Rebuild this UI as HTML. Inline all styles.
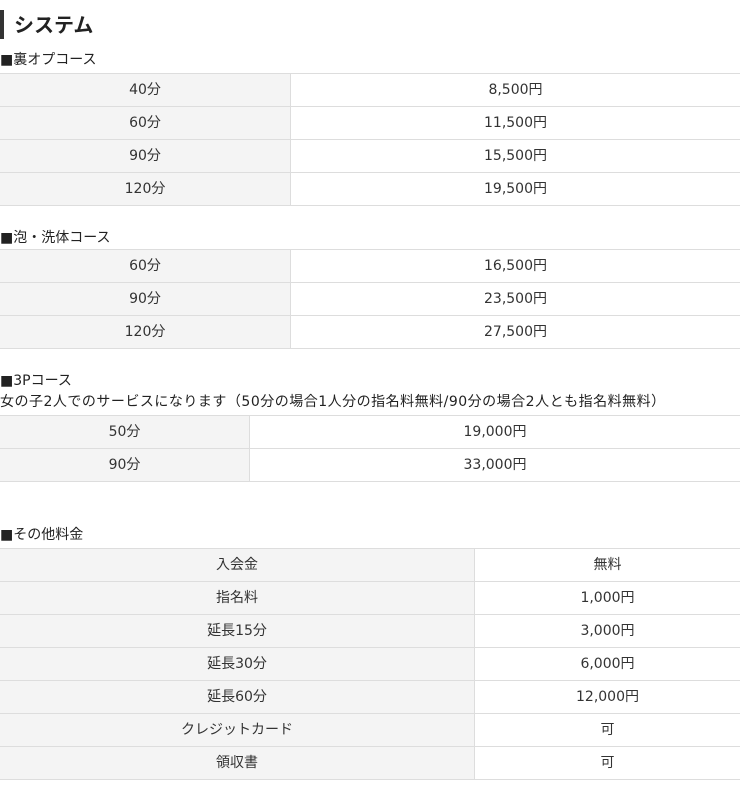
<!DOCTYPE html><html><head><meta charset="utf-8"><style>
body{margin:0;width:740px;height:789px;background:#fff;font-family:"DejaVu Sans","Noto Sans CJK JP",sans-serif;color:#333;position:relative;overflow:hidden}
.h{position:absolute;left:0;top:10px;height:29px;border-left:4px solid #333;padding-left:10px;font-size:20px;font-weight:bold;line-height:28px;color:#222;font-family:"Noto Sans CJK JP",sans-serif}
.l{position:absolute;left:0;font-size:14px;line-height:20px;color:#222}
table{position:absolute;left:0;width:740px;border-collapse:collapse;font-size:14px}
td{height:30px;padding:0 0 2px;text-align:center;border-top:1px solid #ddd;border-bottom:1px solid #ddd}
td.a{background:#f4f4f4;border-right:1px solid #ddd}
</style></head><body>
<div class="h">システム</div>
<div class="l" style="top:50px">■裏オプコース</div>
<table style="top:73px"><tr><td class="a" style="width:290px">40分</td><td>8,500円</td></tr><tr><td class="a">60分</td><td>11,500円</td></tr><tr><td class="a">90分</td><td>15,500円</td></tr><tr><td class="a">120分</td><td>19,500円</td></tr></table>
<div class="l" style="top:228px">■泡・洗体コース</div>
<table style="top:249px"><tr><td class="a" style="width:290px">60分</td><td>16,500円</td></tr><tr><td class="a">90分</td><td>23,500円</td></tr><tr><td class="a">120分</td><td>27,500円</td></tr></table>
<div class="l" style="top:371px">■3Pコース</div>
<div class="l" style="top:392px;letter-spacing:0.5px">女の子2人でのサービスになります（50分の場合1人分の指名料無料/90分の場合2人とも指名料無料）</div>
<table style="top:415px"><tr><td class="a" style="width:249px">50分</td><td>19,000円</td></tr><tr><td class="a">90分</td><td>33,000円</td></tr></table>
<div class="l" style="top:525px">■その他料金</div>
<table style="top:548px"><tr><td class="a" style="width:474px">入会金</td><td>無料</td></tr><tr><td class="a">指名料</td><td>1,000円</td></tr><tr><td class="a">延長15分</td><td>3,000円</td></tr><tr><td class="a">延長30分</td><td>6,000円</td></tr><tr><td class="a">延長60分</td><td>12,000円</td></tr><tr><td class="a">クレジットカード</td><td>可</td></tr><tr><td class="a">領収書</td><td>可</td></tr></table>
</body></html>
